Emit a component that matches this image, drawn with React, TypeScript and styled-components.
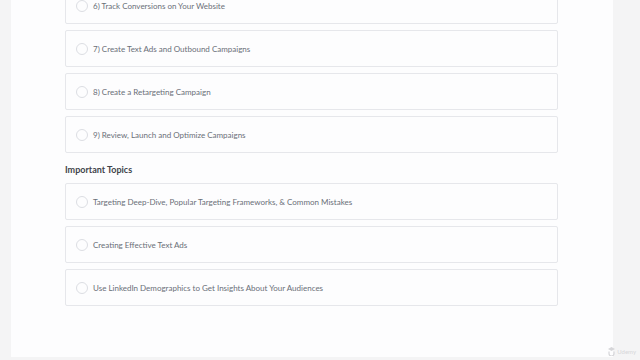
import styled, { createGlobalStyle } from 'styled-components';

const GlobalStyle = createGlobalStyle`
  html, body {
    margin: 0;
    padding: 0;
    background: #f4f4f5;
    overflow: hidden;
  }
  body {
    font-family: Lato, 'Open Sans', sans-serif;
  }
`;

const steps = [
  '6) Track Conversions on Your Website',
  '7) Create Text Ads and Outbound Campaigns',
  '8) Create a Retargeting Campaign',
  '9) Review, Launch and Optimize Campaigns',
];

const topics = [
  'Targeting Deep-Dive, Popular Targeting Frameworks, & Common Mistakes',
  'Creating Effective Text Ads',
  'Use LinkedIn Demographics to Get Insights About Your Audiences',
];

const App = () => {
  return (
    <Page>
      <GlobalStyle />
      <Panel>
        <List>
          {steps.map(s => (
            <Item key={s}>
              <Radio />
              <Label>{s}</Label>
            </Item>
          ))}
        </List>
        <Heading>Important Topics</Heading>
        <List>
          {topics.map(t => (
            <Item key={t}>
              <Radio />
              <Label>{t}</Label>
            </Item>
          ))}
        </List>
      </Panel>
      <Watermark>
        <svg width="7" height="9" viewBox="0 0 7 9">
          <path d="M3.5 0 L7 2 L3.5 4 L0 2 Z" fill="#d6d6d9" />
          <path d="M1 4.5 V6.5 C1 8 2 9 3.5 9 C5 9 6 8 6 6.5 V4.5" stroke="#d6d6d9" strokeWidth="1.2" fill="none" />
        </svg>
        <span>Udemy</span>
      </Watermark>
    </Page>
  );
};

export default App;

const Page = styled.div`
  position: relative;
  width: 640px;
  height: 360px;
  display: flex;
  background: #f4f4f5;
  overflow: hidden;
`;

const Panel = styled.div`
  margin-left: 11px;
  width: 602px;
  height: 357px;
  background: #fdfdfe;
  padding-left: 54px;
  box-sizing: border-box;
  overflow: hidden;
`;

const List = styled.div`
  display: flex;
  flex-direction: column;
  gap: 6px;
  &:first-child {
    margin-top: -13px;
  }
`;

const Item = styled.div`
  width: 493px;
  height: 37px;
  box-sizing: border-box;
  border: 1px solid #e6e7eb;
  border-radius: 2px;
  background: #fdfdfe;
  display: flex;
  align-items: center;
  padding-left: 10px;
  gap: 5px;
`;

const Radio = styled.span`
  width: 10px;
  height: 10px;
  border-radius: 50%;
  border: 1.5px solid #dcdee3;
  flex-shrink: 0;
`;

const Label = styled.span`
  font-size: 8px;
  color: #6a6f78;
  white-space: nowrap;
`;

const Heading = styled.div`
  margin: 10px 0 6px;
  height: 14px;
  line-height: 14px;
  font-size: 9px;
  font-weight: 700;
  color: #41444a;
`;

const Watermark = styled.div`
  position: absolute;
  right: 4px;
  bottom: 4px;
  display: flex;
  align-items: center;
  gap: 2px;
  font-size: 6px;
  color: #d6d6d9;
`;
